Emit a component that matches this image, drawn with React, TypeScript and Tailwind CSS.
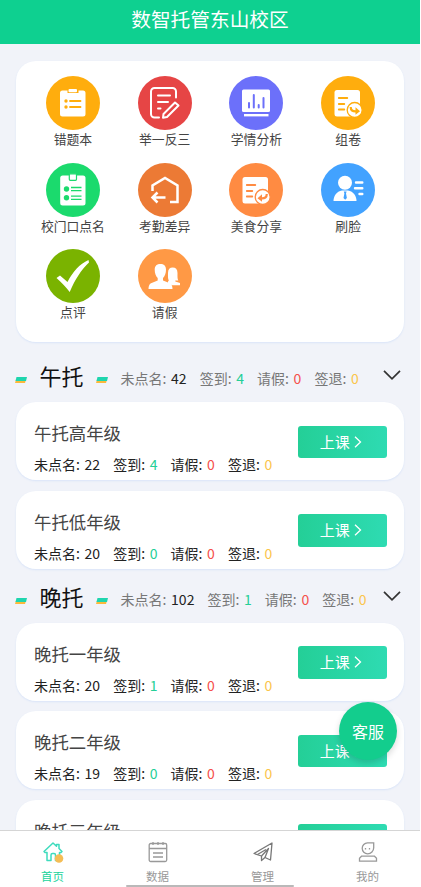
import React from "react";

interface Counts {
  absent: number;
  signIn: number;
  leave: number;
  signOut: number;
}

interface ClassItem {
  name: string;
  counts?: Counts;
}

interface Section {
  title: string;
  counts: Counts;
  classes: ClassItem[];
}

const ListIcon = () => (
  <>
    <path fill="#fff" d="M16.500 14.500h5v2.500h11v-2.500h4.500a2.500 2.500 0 0 1 2.500 2.500v21a2.500 2.500 0 0 1-2.500 2.500h-20.500a2.500 2.500 0 0 1-2.500-2.500v-21a2.500 2.500 0 0 1 2.500-2.500z" />
    <rect x="22.500" y="13" width="8.500" height="3.300" rx="1" fill="#fff" />
    <path stroke="#ffad0d" strokeWidth="1.800" strokeLinecap="round" d="M24 25h10.500M24 31h10.500" />
    <circle cx="20" cy="25" r="1.700" fill="#ffad0d" />
    <circle cx="20" cy="31" r="1.700" fill="#ffad0d" />
  </>
);

const EditIcon = () => (
  <g stroke="#fff" strokeWidth="2" strokeLinecap="round" strokeLinejoin="round">
    <path d="M21 41.500h-4.500a3.500 3.500 0 0 1-3.500-3.500v-22.500a3.500 3.500 0 0 1 3.500-3.500h18a3.500 3.500 0 0 1 3.500 3.500v6" />
    <path d="M20 19.500h12M20 26h10M20 32.500h2.500" />
    <path d="M25.500 38l11.500-11.500 3.500 3-11.500 11.500-4 .8z" />
  </g>
);

const ChartIcon = () => (
  <>
    <rect x="13" y="13.500" width="28" height="22.500" rx="1.500" fill="#fff" />
    <path stroke="#fff" strokeWidth="2.400" d="M15 39.200h24.500" />
    <path stroke="#6c70fa" strokeWidth="2" strokeLinecap="round" d="M20 27v4.500M24.800 19v12.500M29.700 29v2.500M34.500 22v9.500" />
  </>
);

const PaperIcon = ({ color, back }: { color: string; back?: boolean }) => (
  <>
    <rect x="13.500" y="14" width="25.500" height="26.500" rx="2.500" fill="#fff" />
    <path stroke={color} strokeWidth="1.800" strokeLinecap="round" d="M17.800 22h8.500M17.800 28h5.500M17.800 33.500h5.500" />
    <circle cx="33.700" cy="34" r="7.500" fill="#fff" stroke={color} strokeWidth="1.300" />
    {back ? (
      <>
        <path fill={color} d="M28.500 35.200l4.500-4v7.500z" />
        <path stroke={color} strokeWidth="2.200" d="M32 35.300c4 .3 5.800-1 5.800-4.300" />
      </>
    ) : (
      <>
        <path fill={color} d="M39 35.200l-4.500-4v7.500z" />
        <path stroke={color} strokeWidth="2.200" d="M35.500 35.300c-4 .3-5.800-1-5.800-4.300" />
      </>
    )}
  </>
);

const RollCallIcon = () => (
  <>
    <rect x="14.200" y="12.500" width="25.300" height="30" rx="2.500" fill="#fff" />
    <rect x="23.300" y="10.800" width="7.200" height="6.500" rx="1" fill="#fff" stroke="#1bda6d" strokeWidth="1.200" />
    <circle cx="20.500" cy="26" r="2.700" fill="#1bda6d" />
    <circle cx="20.500" cy="34.700" r="2.700" fill="#1bda6d" />
    <path stroke="#1bda6d" strokeWidth="1.300" d="M25 24.500h10.500M25 27.700h10.500M25 33.200h10.500M25 36.400h10.500" />
  </>
);

const HouseBackIcon = () => (
  <g stroke="#fff" strokeWidth="2.500">
    <path d="M14.500 28v-5.500l12.500-7.500 12.500 7.500v16.500h-7.500" />
    <path d="M27.500 34.500h-12.500M19.500 29.500l-5 5 5 5" />
  </g>
);

const FaceIcon = () => (
  <>
    <circle cx="24" cy="19.700" r="7" fill="#fff" />
    <path fill="#fff" d="M12.500 38c0-5 3-9.500 8.500-10.500h6c5.500 1 8.500 5.500 8.500 10.500z" />
    <path fill="#42a2ff" d="M22.800 28.500h2.800l-.6 2 .9 4.500-1.700 1.700-1.700-1.700.9-4.500z" />
    <path stroke="#fff" strokeWidth="2.400" strokeLinecap="round" d="M35 19.500h6.300M34 25.200h7.300M38.500 31h2.800" />
  </>
);

const CheckIcon = () => (
  <path fill="#fff" d="M10.500 29l3.500-2.500 7.500 6.500c5-10 12-18 21-22l.5 2.500c-7.500 7-14 17-19.300 29.500-3.500-4.500-8-9.500-13.200-14z" />
);

const PeopleIcon = () => (
  <>
    <path fill="#fff" d="M30.800 31.500c-1-2-.8-4.500-.8-7.500 0-3.700 1.800-5.500 4.700-5.500s4.800 1.800 4.800 5.500c0 3-.2 5.500.8 7.500h-3v1l4.700 1.500v2.200h-8l-4-2.200v-1.500z" />
    <path fill="#fff" d="M22.400 15c3.400 0 5.600 1.800 5.600 5.500 0 3.800-1.200 6.700-3 8.500v2.500l7 2.800c1.700.8 2.500 3 2.500 5.700h-24c0-2.700.8-4.900 2.500-5.700l6.700-2.800v-2.500c-1.800-1.800-3-4.700-3-8.500 0-3.700 2.300-5.500 5.700-5.500z" />
  </>
);

const apps = [
  { label: "错题本", bg: "bg-[#ffad0d]", icon: <ListIcon /> },
  { label: "举一反三", bg: "bg-[#e64545]", icon: <EditIcon /> },
  { label: "学情分析", bg: "bg-[#6c70fa]", icon: <ChartIcon /> },
  { label: "组卷", bg: "bg-[#ffad0d]", icon: <PaperIcon color="#ffad0d" /> },
  { label: "校门口点名", bg: "bg-[#1bda6d]", icon: <RollCallIcon /> },
  { label: "考勤差异", bg: "bg-[#ec7a35]", icon: <HouseBackIcon /> },
  { label: "美食分享", bg: "bg-[#ff8b42]", icon: <PaperIcon color="#ff8b42" back /> },
  { label: "刷脸", bg: "bg-[#42a2ff]", icon: <FaceIcon /> },
  { label: "点评", bg: "bg-[#7ab300]", icon: <CheckIcon /> },
  { label: "请假", bg: "bg-[#ff9945]", icon: <PeopleIcon /> },
];

const sections: Section[] = [
  {
    title: "午托",
    counts: { absent: 42, signIn: 4, leave: 0, signOut: 0 },
    classes: [
      { name: "午托高年级", counts: { absent: 22, signIn: 4, leave: 0, signOut: 0 } },
      { name: "午托低年级", counts: { absent: 20, signIn: 0, leave: 0, signOut: 0 } },
    ],
  },
  {
    title: "晚托",
    counts: { absent: 102, signIn: 1, leave: 0, signOut: 0 },
    classes: [
      { name: "晚托一年级", counts: { absent: 20, signIn: 1, leave: 0, signOut: 0 } },
      { name: "晚托二年级", counts: { absent: 19, signIn: 0, leave: 0, signOut: 0 } },
      { name: "晚托三年级" },
    ],
  },
];

const Stats = ({ absent, signIn, leave, signOut }: Counts) => (
  <div className="flex gap-[13px] text-[14px] leading-5 whitespace-nowrap">
    <span className="flex gap-[4.700px]">
      未点名: <span className="text-[#222]">{absent}</span>
    </span>
    <span className="flex gap-[4.700px]">
      签到: <span className="text-[#25cf97]">{signIn}</span>
    </span>
    <span className="flex gap-[4.700px]">
      请假: <span className="text-[#f5504b]">{leave}</span>
    </span>
    <span className="flex gap-[4.700px]">
      签退: <span className="text-[#fbc54c]">{signOut}</span>
    </span>
  </div>
);

const Dash = () => (
  <svg width="12" height="6" viewBox="0 0 12 6" className="mt-[8px] shrink-0">
    <path fill="#fbb93c" d="M1 2.500h10l-1 3.500h-10z" />
    <path fill="#1fd5ae" d="M1.500 0h10.500l-1 4h-10.500z" />
  </svg>
);

const SectionHeader = ({ section }: { section: Section }) => (
  <div className="flex h-[32px] items-center pl-[15px]">
    <Dash />
    <h2 className="mr-[12px] mb-[2px] ml-[12.500px] w-[44px] text-[22px] leading-8 text-[#111]">{section.title}</h2>
    <Dash />
    <div className="mt-[4px] ml-[13px] flex-1 text-[#777]">
      <Stats {...section.counts} />
    </div>
    <svg width="18" height="10" viewBox="0 0 18 10" fill="none" className="mr-[19px] mb-[2px]">
      <path stroke="#333" strokeWidth="1.700" d="M1 .8l8 8 8-8" />
    </svg>
  </div>
);

const ClassCard = ({ item }: { item: ClassItem }) => (
  <li className="flex h-[78px] justify-between rounded-[20px] bg-white pr-[17.500px] pl-[18px] shadow-[0_1px_2px_#d9e4f8]">
    <div>
      <h3 className="mt-[18px] text-[17.400px] leading-[26px] text-[#444]">{item.name}</h3>
      <div className="mt-[8px] text-[#222]">{item.counts && <Stats {...item.counts} />}</div>
    </div>
    <button className="mt-[23.500px] flex h-[32.500px] w-[88.500px] items-center justify-center gap-[4px] rounded-[3px] bg-linear-to-r from-[#24cf97] to-[#2edbb2] pr-[3px] text-[15px] text-white">
      上课
      <svg width="8" height="12" viewBox="0 0 8 12" fill="none">
        <path stroke="#fff" strokeWidth="1.300" d="M1 .8l5.500 5.200-5.500 5.200" />
      </svg>
    </button>
  </li>
);

const HomeIcon = () => (
  <svg width="22" height="22" viewBox="0 0 22 22" fill="none">
    <path stroke="#3edbbd" strokeWidth="1.500" strokeLinejoin="round" d="M2 10.500l9-8.500 3.500 3.300v-1.800h2.500v4l3 3-1 1h-1.500v8h-4v-5.500a1.500 1.500 0 0 0-1.500-1.500h-1.500a1.500 1.500 0 0 0-1.500 1.500v5.500h-4v-8h-2z" />
    <circle cx="17" cy="17.500" r="4.300" fill="#f5bd55" />
  </svg>
);

const DataIcon = () => (
  <svg width="22" height="22" viewBox="0 0 22 22" fill="none" stroke="#999" strokeWidth="1.300">
    <rect x="2.200" y="2.500" width="17.500" height="18" rx="1.500" />
    <path d="M2 7.500h18M6 1v3M11 1v3M16 1v3M6 12h10M6 16h10" />
  </svg>
);

const ManageIcon = () => (
  <svg width="22" height="22" viewBox="0 0 22 22" fill="none" stroke="#777" strokeWidth="1.300" strokeLinejoin="round">
    <path d="M2 12.500l18-10.500-1.500 17-5.500-2.500-3.500 3v-4.500z" />
    <path d="M9.500 15l7-7.500-3.500 9M5.500 13.500l8.500-5" />
  </svg>
);

const MineIcon = () => (
  <svg width="22" height="22" viewBox="0 0 22 22" fill="none" stroke="#999" strokeWidth="1.300">
    <path d="M10.500 1.800h6.200v5a6 6 0 0 1-6 6 5.500 5.500 0 0 1-5.500-5.500 5.500 5.500 0 0 1 5.300-5.500z" />
    <path d="M4.500 15.200h13l2 2v3h-17v-3zM8.500 7v1.500M12.500 7v1.500" />
  </svg>
);

const tabs = [
  { label: "首页", icon: <HomeIcon />, color: "text-[#20d39b]" },
  { label: "数据", icon: <DataIcon />, color: "text-[#999]" },
  { label: "管理", icon: <ManageIcon />, color: "text-[#999]" },
  { label: "我的", icon: <MineIcon />, color: "text-[#999]" },
];

const App: React.FC = () => (
  <div className="relative flex h-[887px] w-[420px] flex-col overflow-hidden bg-[#f1f3f9] font-['Noto_Sans_CJK_SC',sans-serif]">
    <header className="flex h-[44px] shrink-0 justify-center bg-[#0ed090] pt-[4px] text-[19.700px] leading-[30px] text-white">
      数智托管东山校区
    </header>

    <main className="min-h-0 flex-1 overflow-hidden">
      <div className="mx-4 mt-[17px] grid h-[281px] auto-rows-[86.500px] grid-cols-4 rounded-[20px] bg-white pt-[15px] pr-[10px] pl-[11px] shadow-[0_1px_2px_#d9e4f8]">
        {apps.map((app) => (
          <div key={app.label} className="flex flex-col items-center">
            <div className={`size-[54px] rounded-full ${app.bg}`}>
              <svg width="54" height="54" viewBox="0 0 54 54" fill="none">
                {app.icon}
              </svg>
            </div>
            <span className="-mt-px text-[12.800px] leading-5 whitespace-nowrap text-[#444]">{app.label}</span>
          </div>
        ))}
      </div>

      <div className="mt-[18px] flex flex-col gap-[12px]">
        {sections.map((section) => (
          <section key={section.title}>
            <SectionHeader section={section} />
            <ul className="mx-4 mt-[10px] flex flex-col gap-[10.700px]">
              {section.classes.map((item) => (
                <ClassCard key={item.name} item={item} />
              ))}
            </ul>
          </section>
        ))}
      </div>
    </main>

    <button className="absolute top-[702px] left-[339px] size-[58px] rounded-full bg-[#13cd8d] text-[16px] text-white shadow-[0_3px_6px_rgba(0,0,0,0.15)]">
      客服
    </button>

    <nav className="relative grid h-[57px] shrink-0 grid-cols-4 border-t border-[#d5d5d5] bg-white">
      {tabs.map((tab) => (
        <div key={tab.label} className={`flex flex-col items-center pt-[10px] ${tab.color}`}>
          {tab.icon}
          <span className="mt-[4px] text-[11.500px] leading-[18px]">{tab.label}</span>
        </div>
      ))}
      <div className="absolute bottom-0 left-[126px] h-[2px] w-[168px] rounded-full bg-[#b9b9b9]" />
    </nav>
  </div>
);

export default App;
